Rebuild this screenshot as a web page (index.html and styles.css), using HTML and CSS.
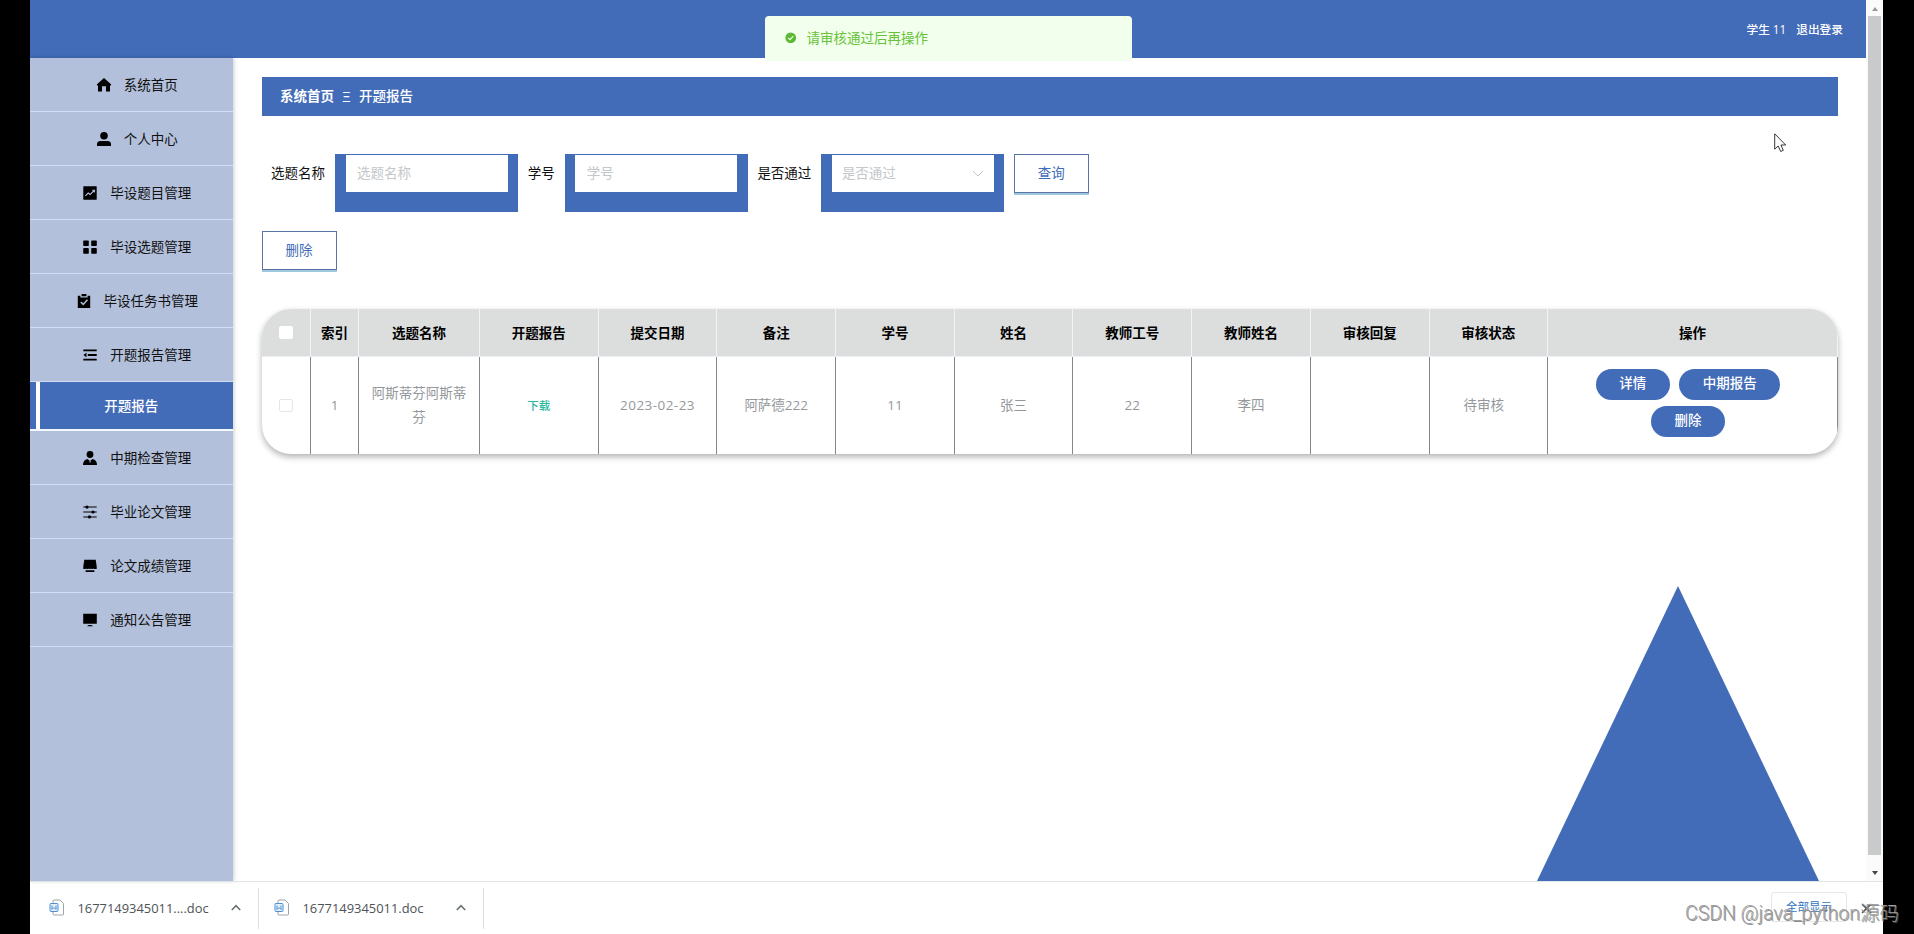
FILE: index.html
```html
<!DOCTYPE html>
<html lang="zh-CN">
<head>
<meta charset="utf-8">
<title>开题报告</title>
<link rel="stylesheet" href="styles.css">
</head>
<body>
<div class="screen">
  <div class="viewport">
    <div class="app">
      <header class="topbar"><span>学生 11</span><a>退出登录</a></header>
      <div class="content">
        <nav class="sidebar">
          <a class="item"><svg viewBox="0 0 14 14"><path d="M7 0 14 6.3V7.5H13V13.5H9V8.2H5V13.5H1V7.5H0V6.3Z"/></svg>系统首页</a>
          <a class="item"><svg viewBox="0 0 14 14"><circle cx="7" cy="3.8" r="3.8"/><path d="M0 14V12Q0 9 4 9H10Q14 9 14 12V14Z"/></svg>个人中心</a>
          <a class="item"><svg viewBox="0 0 14 14"><rect x=".3" y=".3" width="13.4" height="13.4" rx=".5"/><path class="cut" d="M2.4 9.8 5.2 7l2 1.5L11 4.7M9.2 4.2h2.2v2.2"/></svg>毕设题目管理</a>
          <a class="item"><svg viewBox="0 0 14 14"><rect x=".2" y=".5" width="5.6" height="5.6" rx=".8"/><rect x="8.2" y=".5" width="5.6" height="5.6" rx=".8"/><rect x=".2" y="8.1" width="5.6" height="5.6" rx=".8"/><rect x="8.2" y="8.1" width="5.6" height="5.6" rx=".8"/></svg>毕设选题管理</a>
          <a class="item"><svg viewBox="0 0 14 14"><path d="M.8 1.7H3.4V3.5H10.6V1.7H13.2V14H.8ZM4.6 0H9.4V2.3H4.6Z"/><path class="cut wide" d="M3.8 8 6.2 10.4 10.5 5.8"/></svg>毕设任务书管理</a>
          <a class="item"><svg viewBox="0 0 14 14"><path d="M.3 1.5H13.7V3.3H.3ZM4.8 6.1H13.7V7.9H4.8ZM.3 10.7H13.7V12.5H.3ZM.3 7 3.5 4.8V9.2Z"/></svg>开题报告管理</a>
          <a class="sub">开题报告</a>
          <a class="item"><svg viewBox="0 0 14 14"><circle cx="7" cy="3.5" r="3.4"/><path d="M0 14Q0 8.8 4.5 7.9L7 10 9.5 7.9Q14 8.8 14 14Z"/><path class="cut" d="M7 9.8V11.5"/></svg>中期检查管理</a>
          <a class="item"><svg viewBox="0 0 14 14"><path d="M.3 1.6H13.7V2.6H.3ZM.3 6.5H13.7V7.5H.3ZM.3 11.4H13.7V12.4H.3Z"/><circle cx="4" cy="2.1" r="1.6"/><circle cx="10" cy="7" r="1.6"/><circle cx="6.5" cy="11.9" r="1.6"/></svg>毕业论文管理</a>
          <a class="item"><svg viewBox="0 0 14 14"><path d="M1.3.7H12.7L13.7 7.5V10H.3V7.5ZM2.6 11.3H11.4V13H2.6Z"/><path class="cut" d="M2.8 10.4H11.4" stroke-dasharray="1.3 1"/></svg>论文成绩管理</a>
          <a class="item"><svg viewBox="0 0 14 14"><path d="M.2.8H13.8V10.7H.2ZM5.5 11.9H8.5L10 13.2H4Z"/></svg>通知公告管理</a>
        </nav>
        <main class="main">
          <div class="crumbs"><b>系统首页</b><i>Ξ</i><span>开题报告</span></div>
          <div class="filters">
            <label>选题名称</label><div class="field"><div class="input">选题名称</div></div>
            <label>学号</label><div class="field"><div class="input">学号</div></div>
            <label>是否通过</label><div class="field"><div class="input select">是否通过<svg viewBox="0 0 12 8"><path d="M1 1 6 6 11 1"/></svg></div></div>
            <button class="btn">查询</button>
          </div>
          <button class="btn">删除</button>
          <div class="table">
            <div class="row head">
              <div><span class="check"></span></div><div>索引</div><div>选题名称</div><div>开题报告</div><div>提交日期</div><div>备注</div><div>学号</div><div>姓名</div><div>教师工号</div><div>教师姓名</div><div>审核回复</div><div>审核状态</div><div>操作</div>
            </div>
            <div class="row data">
              <div><span class="check"></span></div><div>1</div><div class="wrap">阿斯蒂芬阿斯蒂芬</div><div><a class="link">下载</a></div><div class="date">2023-02-23</div><div>阿萨德222</div><div>11</div><div>张三</div><div>22</div><div>李四</div><div></div><div class="status">待审核</div>
              <div class="ops"><button>详情</button><button class="long">中期报告</button><button>删除</button></div>
            </div>
          </div>
          <div class="triangle"></div>
        </main>
      </div>
    </div>
    <div class="scroll"><span class="up"></span><div class="thumb"></div><span class="down"></span></div>
  </div>
  <footer class="downloads">
    <div class="file"><svg class="doc" viewBox="0 0 16 17"><path class="page" d="M4 4V2Q4 1 5 1H11L14.5 4.5V15Q14.5 16 13.5 16H5Q4 16 4 15V13"/><rect x="1" y="4.5" width="8" height="8" rx="1"/><path class="w" d="M3 6.5V10.5L5 8.5 7 10.5V6.5"/></svg><span>1677149345011....doc</span><svg class="caret" viewBox="0 0 10 7"><path d="M.8 6 5 1.6 9.2 6"/></svg></div>
    <div class="file"><svg class="doc" viewBox="0 0 16 17"><path class="page" d="M4 4V2Q4 1 5 1H11L14.5 4.5V15Q14.5 16 13.5 16H5Q4 16 4 15V13"/><rect x="1" y="4.5" width="8" height="8" rx="1"/><path class="w" d="M3 6.5V10.5L5 8.5 7 10.5V6.5"/></svg><span>1677149345011.doc</span><svg class="caret" viewBox="0 0 10 7"><path d="M.8 6 5 1.6 9.2 6"/></svg></div>
    <button class="all">全部显示</button>
    <svg class="close" viewBox="0 0 10 10"><path d="M1 1 9 9M9 1 1 9"/></svg>
  </footer>
</div>
<div class="toast"><svg viewBox="0 0 12 12"><circle cx="6" cy="6" r="5.6"/><path d="M3.3 6.1 5.2 8 8.7 4.4"/></svg>请审核通过后再操作</div>
<svg class="cursor" viewBox="0 0 13 20"><path d="M.7.8V16.2L4.2 13 6.7 18.5 9.3 17.3 6.9 12H11.7Z"/></svg>
<div class="watermark">CSDN @java_python源码</div>
</body>
</html>
```
FILE: styles.css
```css
* { box-sizing: border-box; }
body {
  margin: 0;
  height: 934px;
  background: #000;
  overflow: hidden;
  position: relative;
  font: 13.5px/20px "Open Sans", "Noto Sans CJK SC", sans-serif;
  color: #111;
}
button { font: inherit; padding: 0; }
.screen { margin: 0 31px 0 30px; height: 934px; background: #fff; display: flex; flex-direction: column; }
.viewport { height: 881px; display: flex; }
.app { flex: 1; display: flex; flex-direction: column; }
.topbar {
  height: 58px; background: #426cb7; color: #fff;
  display: flex; justify-content: flex-end; align-items: center; gap: 10px;
  padding: 0 23px 0 0; font-size: 11.7px; font-weight: 500;
}
.content { flex: 1; display: flex; }
.sidebar { width: 202.5px; margin-right: .5px; background: #b3c0db; box-shadow: 1px 0 4px rgba(0, 0, 0, .2); }
.item {
  height: 54px; border-bottom: 1px solid #d3def4; padding-left: 12px;
  display: flex; align-items: center; justify-content: center; gap: 13px;
}
.item svg { width: 14px; height: 14px; }
.cut { fill: none; stroke: #b3c0db; stroke-width: 1.1; }
.cut.wide { stroke-width: 1.5; }
.sub {
  height: 49px; display: flex; align-items: center; justify-content: center;
  border-bottom: 2px solid #f4f8ff; color: #fff; font-weight: 500;
  background: linear-gradient(90deg, #426cb7 6px, #fff 6px, #fff 10px, #426cb7 10px);
}
.main { flex: 1; position: relative; padding: 19px 28px 0 29px; display: flex; flex-direction: column; align-items: flex-start; overflow: hidden; }
.crumbs {
  align-self: stretch; height: 39px; padding: 0 0 1px 18.5px; margin-left: -.5px; background: #426cb7; color: #fff;
  display: flex; align-items: center; font-weight: 500;
}
.crumbs b { font-weight: 700; }
.crumbs i { width: 25px; text-align: center; font-style: normal; font-size: 15px; font-weight: 400; }
.filters { display: flex; margin: 38px 0 19px 9px; height: 58px; align-items: flex-start; }
.filters label { line-height: 39px; margin-right: 10px; }
.field { width: 183px; height: 58px; margin-right: 9.7px; padding: 1px 10.5px 0; background: #426cb7; }
.input { height: 37px; background: #fff; color: #c3c7ca; line-height: 37px; padding-left: 11.5px; }
.select { display: flex; justify-content: space-between; align-items: center; padding: 0 10px; }
.select svg { width: 12px; height: 8px; fill: none; stroke: #c3c7ca; }
.btn {
  width: 75px; height: 39px; background: #fff; color: #426cb7; margin-left: -.4px; padding-bottom: 1px;
  border: 1px solid #5a74a8; box-shadow: 0 2px 0 #9fc8de;
}
.table {
  align-self: stretch; margin-top: 39px; border-radius: 29px; overflow: hidden;
  box-shadow: 0 3px 6px rgba(0, 0, 0, .3);
}
.row { display: grid; grid-template-columns: 49px 48px 121px repeat(9, 118.7px) 1fr; }
.row > div { display: flex; align-items: center; justify-content: center; text-align: center; border-right: 1px solid #85878f; }
.head { height: 48px; background: #dcdddd; color: #000; font-weight: 700; }
.head > div { border-right-color: #f2f3f6; border-bottom: 1px solid #ebeef2; }
.data { height: 97px; color: #94989b; line-height: 23.2px; }
.check { width: 13.5px; height: 13.5px; background: #fff; border: 1px solid #e4e6e9; border-radius: 2px; }
.head .check { border-color: #fff; }
.row > .wrap { padding: 0 12px; }
.link { color: #2bb8a0; font-size: 11.6px; font-weight: 500; }
.date { letter-spacing: .45px; }
.row > .status { padding-right: 9px; }
.row > .ops { flex-wrap: wrap; align-content: center; gap: 6px 9.5px; padding: 0 30px 6px 21px; }
.ops button { width: 74px; height: 31px; border: 0; border-radius: 16px; background: #426cb7; color: #fff; font-weight: 500; }
.ops .long { width: 101px; }
.triangle {
  position: absolute; right: 47px; bottom: 0; width: 282px; height: 295px;
  background: #426cb7; clip-path: polygon(50% 0, 100% 100%, 0 100%);
}
.scroll { width: 17px; background: #fbfbfc; display: flex; flex-direction: column; align-items: center; padding: 7px 0 6px; }
.up { border: 3.5px solid transparent; border-top: 0; border-bottom: 4px solid #999; }
.down { border: 3.5px solid transparent; border-bottom: 0; border-top: 4px solid #444; }
.thumb { width: 13px; height: 839px; background: #c9cacb; margin: 5px 0 auto; }
.downloads { height: 53px; border-top: 1px solid #dfe4e7; display: flex; align-items: flex-start; padding: 6px 9px 0 0; }
.file { height: 41px; padding-bottom: 2px; display: flex; align-items: center; border-right: 1px solid #dbe0e2; color: #4e5356; font-size: 12.9px; }
.file:first-child { width: 229px; }
.file:nth-child(2) { width: 225px; }
.file:first-child { padding-left: 18.5px; }
.file:nth-child(2) { padding-left: 14.5px; }
.doc { width: 16px; height: 17px; margin-right: 13px; fill: none; stroke: #4d8fd6; }
.doc .page { stroke: #9aa5ad; }
.doc rect { fill: #e5f0fb; }
.caret { width: 10px; height: 7px; margin: 0 17px 0 auto; fill: none; stroke: #697074; stroke-width: 1.6; }
.all {
  margin: 4px 14px 0 auto; width: 76px; height: 30px; border: 1px solid #e5e7ea; border-radius: 3px;
  background: #fff; color: #3474c0; font-size: 11.5px;
}
.close { width: 11px; height: 11px; margin: 15px 2px 0 0; stroke: #555; stroke-width: 1.4; }
.toast {
  position: absolute; left: 765px; top: 16px; width: 367px; height: 45px; border-radius: 4px 4px 0 0;
  background: #f1ffec; color: #67c23a; display: flex; align-items: center; gap: 10px; padding: 0 0 2px 20px;
}
.toast svg { width: 11.5px; height: 11.5px; fill: #5cb834; }
.toast svg path { fill: none; stroke: #f1ffec; stroke-width: 1.2; }
.cursor { position: absolute; left: 1773.5px; top: 133px; width: 13px; height: 20px; fill: #fff; stroke: #222; stroke-width: .9; }
.watermark {
  position: absolute; left: 1685px; top: 901px; white-space: nowrap;
  font: 300 19.5px/26px "Roboto", "Noto Sans CJK SC", sans-serif; color: #a0a0a0;
  text-shadow: 1px 1px 0 rgba(110, 110, 110, .75);
}
```
